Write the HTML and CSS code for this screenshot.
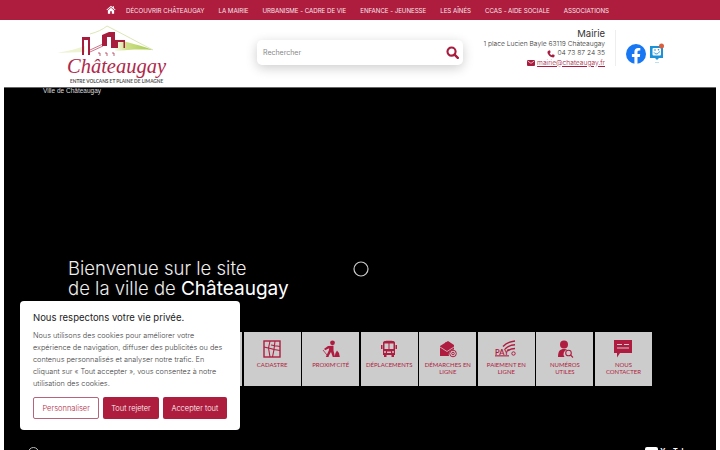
FILE: index.html
```html
<!DOCTYPE html>
<html lang="fr">
<head>
    <meta charset="UTF-8">
    <meta name="viewport" content="width=device-width, initial-scale=1.0">
    <title>Ville de Châteaugay</title>
    <link rel="stylesheet" href="styles.css">
</head>
<body>
    <nav class="topbar">
        <svg class="home-icon" viewBox="0 0 24 20"><path d="M12 1 L1 10.500 L2.500 12 L12 4 L21.500 12 L23 10.500 L19 7 V2 H16 V4.500Z M4.500 12.500 V20 H10 V14 H14 V20 H19.500 V12.500 L12 6Z" fill="#fff"/></svg>
        <a href="#">DÉCOUVRIR CHÂTEAUGAY</a>
        <a href="#">LA MAIRIE</a>
        <a href="#">URBANISME - CADRE DE VIE</a>
        <a href="#">ENFANCE - JEUNESSE</a>
        <a href="#">LES AÎNÉS</a>
        <a href="#">CCAS - AIDE SOCIALE</a>
        <a href="#">ASSOCIATIONS</a>
    </nav>

    <header class="header">
        <div class="logo">
            <svg class="logo-art" viewBox="0 0 110 32">
                <defs>
                    <linearGradient id="hill" x1="0" y1="0" x2="1" y2="0">
                        <stop offset="0" stop-color="#fbfcf0"/>
                        <stop offset="0.300" stop-color="#cfe08a"/>
                        <stop offset="1" stop-color="#a5c94a"/>
                    </linearGradient>
                </defs>
                <path d="M2 28 C12 26 22 24 30 21 L30 27Z" fill="#eef3d4"/>
                <path d="M60 14 C72 17 88 21 98 25 C84 24 72 25 60 26Z" fill="url(#hill)"/>
                <path d="M35 9 C42 7 47 5 52 1 C68 9 84 18 98 25" fill="none" stroke="#d3dfa4" stroke-width=".8"/>
                <path d="M27 30 V12 H35 V30 H33 V15 H29 V30Z" fill="#a81c3e"/>
                <path d="M35 27 L48 21 M35 25 L48 19" stroke="#a81c3e" stroke-width=".6"/>
                <path d="M47 10 L54 7 H60 V23 H56 V12 H52 V21 H47Z" fill="#a81c3e"/>
                <path d="M60 15 H70 V23 H68.500 V17 H63 V23 H60Z" fill="#a81c3e"/>
                <path d="M43 28 h2 v3 M50 28 h2 v3 M57 28 h2 v3" stroke="#a81c3e" stroke-width=".7" fill="none"/>
            </svg>
            <div class="logo-name">Châteaugay</div>
            <div class="logo-tag">ENTRE VOLCANS ET PLAINE DE LIMAGNE</div>
        </div>

        <form class="search">
            <span class="search-label">Rechercher</span>
            <svg class="search-icon" viewBox="0 0 16 16"><circle cx="6.800" cy="6.800" r="5" fill="none" stroke="#a81c3e" stroke-width="2.600"/><path d="M10.500 10.500 L14.500 14.500" stroke="#a81c3e" stroke-width="3" stroke-linecap="round"/></svg>
        </form>

        <address class="contact">
            <strong>Mairie</strong>
            <span>1 place Lucien Bayle 63119 Châteaugay</span>
            <span class="contact-line">
                <svg class="mini-icon" viewBox="0 0 12 12"><path d="M2 1 L4.500 .5 L5.500 3.500 L4 4.800 C4.600 6.200 5.800 7.400 7.200 8 L8.500 6.500 L11.500 7.500 L11 10 C10.500 11.500 8.500 11.500 6.500 10.500 C4 9.300 2.500 7.700 1.300 5.500 C.4 3.800 .6 2 2 1Z" fill="#a81c3e"/></svg>
                04 73 87 24 35
            </span>
            <span class="contact-line">
                <svg class="mini-icon" viewBox="0 0 12 9"><rect width="12" height="9" rx="1.500" fill="#a81c3e"/><path d="M1 1.500 L6 5 L11 1.500" stroke="#fff" fill="none"/></svg>
                <a href="#">mairie@chateaugay.fr</a>
            </span>
        </address>

        <div class="social">
            <svg class="fb-icon" viewBox="0 0 20 20"><circle cx="10" cy="10" r="10" fill="#1877f2"/><path d="M8.400 20 V12.900 H5.900 V10 H8.400 V7.800 C8.400 5.300 9.900 3.900 12.100 3.900 C13.200 3.900 14.300 4.100 14.300 4.100 V6.500 H13.100 C11.900 6.500 11.500 7.300 11.500 8 V10 H14.200 L13.800 12.900 H11.500 V20Z" fill="#fff"/></svg>
            <svg class="msg-icon" viewBox="0 0 16 21">
                <path d="M1 3 H14 V15 H10 L8 17 L6 15 H1Z" fill="#1b92d8"/>
                <rect x="3.500" y="5" width="8.500" height="7.500" rx="1" fill="#fff"/>
                <path d="M5 9.500 C6.500 11.500 9 11.500 10.500 8.500" stroke="#1b92d8" fill="none"/>
                <circle cx="6" cy="7" r=".8" fill="#1b92d8"/><circle cx="9.500" cy="6.700" r=".8" fill="#1b92d8"/>
                <rect x="6" y="19" width="4" height="1" fill="#bcdff3"/>
                <circle cx="12.500" cy="3" r="2.500" fill="#d9603f"/>
            </svg>
        </div>
    </header>

    <main class="hero">
        <div class="hero-caption">Ville de Châteaugay</div>
        <h1 class="hero-title">Bienvenue sur le site<br>de la ville de <b>Châteaugay</b></h1>

        <div class="services">
            <div class="service"></div>
            <div class="service"></div>
            <div class="service"></div>
            <a class="service" href="#">
                <svg viewBox="0 0 18 18"><rect x="1" y="1" width="16" height="16" fill="none" stroke="#b01c40" stroke-width="1.400"/><path d="M7 1 L5.500 8 L1 7 M5.500 8 L7 17 M5.500 8 L11 9.500 L9.500 17 M11 9.500 L17 10.500 M8 5 L17 6.500 M12 1 L11 9.500" fill="none" stroke="#b01c40" stroke-width="1.100"/></svg>
                <span>CADASTRE</span>
            </a>
            <a class="service" href="#">
                <svg viewBox="0 0 18 18"><circle cx="10.500" cy="2.800" r="2.400" fill="#b01c40"/><path d="M6 6 L11.500 5.800 L11.500 10.500 L13 17 H10.800 L9 12 L6 17 H3.800 L6.800 10.500 L7.200 8.300 L3 10.200 L2.200 8.800Z" fill="#b01c40"/><path d="M1 10 L6.500 17" stroke="#b01c40" stroke-width=".8"/><path d="M12.500 17 L13.500 13 L15 10.500 L17 13 L17.800 17Z" fill="#b01c40"/></svg>
                <span>PROXIM'CITÉ</span>
            </a>
            <a class="service" href="#">
                <svg viewBox="0 0 18 18"><path d="M3 3 C3 1 5 .8 9 .8 C13 .8 15 1 15 3 V15 H3Z M1 5 H2.500 V9 H1Z M15.500 5 H17 V9 H15.500Z" fill="#b01c40"/><rect x="4.500" y="3.500" width="4" height="5.500" fill="#ccc"/><rect x="9.500" y="3.500" width="4" height="5.500" fill="#ccc"/><rect x="7" y="11.500" width="4" height="1.500" fill="#ccc"/><circle cx="5" cy="12" r="1" fill="#ccc"/><circle cx="13" cy="12" r="1" fill="#ccc"/><rect x="4" y="15" width="2.500" height="2" fill="#b01c40"/><rect x="11.500" y="15" width="2.500" height="2" fill="#b01c40"/></svg>
                <span>DÉPLACEMENTS</span>
            </a>
            <a class="service" href="#">
                <svg viewBox="0 0 18 18"><path d="M1 6 L9 1 L15 5 V9.500 A5 5 0 0 0 10 16 H1Z" fill="#b01c40"/><path d="M1 7 L8 11.500 L15 7" stroke="#ccc" fill="none" stroke-width=".8"/><path d="M6 3 H11" stroke="#b01c40"/><circle cx="14" cy="13.500" r="3.300" fill="none" stroke="#b01c40"/><circle cx="14" cy="13.500" r="1.300" fill="none" stroke="#b01c40"/></svg>
                <span>DÉMARCHES EN<br>LIGNE</span>
            </a>
            <a class="service" href="#">
                <svg viewBox="0 0 22 18" class="pay-icon"><path d="M8 6.500 C11 3 15 1.500 20 1 M10 9 C12.500 6.500 16 5 20 4.800 M12.500 11 C14.500 9.500 17 8.500 20 8.500" stroke="#b01c40" stroke-width="1.400" fill="none"/><circle cx="18.500" cy="13.500" r="1.700" fill="none" stroke="#b01c40"/><rect x="0" y="15.300" width="14" height="1.100" fill="#b01c40"/><text x="0" y="14.500" class="pay-text">PAY</text></svg>
                <span>PAIEMENT EN<br>LIGNE</span>
            </a>
            <a class="service" href="#">
                <svg viewBox="0 0 18 18"><circle cx="8" cy="4.500" r="4" fill="#b01c40"/><path d="M2 17 C2 11 4 9 8 9 C9.500 9 10.500 9.300 11 9.800 A4.500 4.500 0 0 0 8.500 17Z" fill="#b01c40"/><circle cx="12.500" cy="13" r="2.800" fill="none" stroke="#b01c40" stroke-width="1.100"/><path d="M14.500 15 L17 17.500" stroke="#b01c40" stroke-width="1.100"/></svg>
                <span>NUMÉROS<br>UTILES</span>
            </a>
            <a class="service" href="#">
                <svg viewBox="0 0 18 18"><path d="M0 0 H18 V13 H6 L3 17.500 V13 H0Z" fill="#b01c40"/><path d="M3 4.500 H8 M10 4.500 H15 M3 8 H15" stroke="#ccc" stroke-width="1.100"/></svg>
                <span>NOUS<br>CONTACTER</span>
            </a>
        </div>

        <div class="hero-foot">
            <span class="foot-mark"></span>
            <span class="foot-yt"><i></i>YouTube</span>
        </div>

        <svg class="spinner" viewBox="0 0 16 16"><circle cx="8" cy="8" r="7" fill="none" stroke="#ccc" stroke-width="1.200"/></svg>
    </main>

    <aside class="cookie">
        <h2>Nous respectons votre vie privée.</h2>
        <p>Nous utilisons des cookies pour améliorer votre expérience de navigation, diffuser des publicités ou des contenus personnalisés et analyser notre trafic. En cliquant sur « Tout accepter », vous consentez à notre utilisation des cookies.</p>
        <div class="cookie-buttons">
            <button class="btn-wide btn-outline">Personnaliser</button>
            <button>Tout rejeter</button>
            <button class="btn-wide">Accepter tout</button>
        </div>
    </aside>
</body>
</html>
```

FILE: styles.css
```css
html, body {
    height: 450px;
    overflow: hidden;
}

body {
    margin: 0;
    font-family: 'Inter', sans-serif;
    background: #fff;
    color: #333;
}

a {
    color: inherit;
    text-decoration: none;
}

.topbar {
    height: 20px;
    background: #ae1c3e;
    display: flex;
    align-items: center;
    padding-left: 106px;
    gap: 14px;
    color: #f4e4e8;
    font-size: 6.200px;
    letter-spacing: -0.05px;
}

.home-icon {
    width: 10px;
    height: 9px;
    margin: -2px -4px 0 0;
}

.header {
    height: 67px;
    display: flex;
    align-items: flex-start;
    padding-left: 55px;
}

.logo {
    width: 112px;
    margin-top: 5px;
    text-align: left;
}

.logo-art {
    display: block;
    width: 110px;
    height: 32px;
}

.logo-name {
    font-family: 'Liberation Serif', serif;
    font-style: italic;
    font-size: 20.500px;
    line-height: 19px;
    color: #b0284a;
    margin-left: 12px;
}

.logo-tag {
    font-family: 'Lato', sans-serif;
    font-size: 4.800px;
    font-weight: 700;
    color: #555;
    margin: 2px 0 0 15px;
    white-space: nowrap;
}

.search {
    box-sizing: border-box;
    margin: 20px 0 0 90px;
    width: 206px;
    height: 25px;
    background: #fff;
    border-radius: 5px;
    box-shadow: 0 3px 12px rgba(0, 0, 0, 0.2);
    display: flex;
    align-items: center;
    justify-content: space-between;
    padding: 0 4px 0 6px;
    font-size: 7px;
    color: #888;
}

.search-icon {
    width: 13px;
    height: 13px;
}

.contact {
    margin-top: 8px;
    width: 142px;
    display: flex;
    flex-direction: column;
    align-items: flex-end;
    font-style: normal;
    font-size: 6.700px;
    font-weight: 300;
    line-height: 9.300px;
    color: #333;
    white-space: nowrap;
}

.contact strong {
    font-size: 9.500px;
    font-weight: 400;
    line-height: 12px;
}

.contact-line {
    display: flex;
    align-items: center;
    gap: 2px;
}

.contact-line a {
    color: #a81c3e;
    text-decoration: underline;
}

.mini-icon {
    width: 8px;
    height: 8px;
}

.social {
    box-sizing: border-box;
    margin: 10px 0 0 10px;
    padding: 14px 0 0 10px;
    height: 36px;
    border-left: 1px solid #eee;
    display: flex;
    align-items: flex-start;
    gap: 3px;
}

.fb-icon {
    width: 20px;
    height: 20px;
}

.msg-icon {
    width: 16px;
    height: 21px;
    margin-top: -1px;
}

.hero {
    position: relative;
    margin: 0 4px;
    height: 363px;
    box-sizing: border-box;
    background: #000;
    border-top: 1px solid #666;
    color: #fff;
}

.hero-caption {
    font-family: 'Liberation Sans', sans-serif;
    font-size: 6.500px;
    padding-left: 39px;
    line-height: 5px;
    color: #ddd;
}

.hero-title {
    margin: 165px 0 0 64px;
    font-size: 18.500px;
    line-height: 20px;
    font-weight: 300;
    color: #eee;
}

.hero-title b {
    font-size: 19px;
    font-weight: 400;
    color: #fff;
}

.services {
    margin: 33px 0 0 64px;
    width: 584px;
    display: grid;
    grid-template-columns: repeat(10, 1fr);
    gap: 1.500px;
}

.service {
    height: 54px;
    background: #ccc;
    box-sizing: border-box;
    padding: 8px 2px 0;
    display: flex;
    flex-direction: column;
    align-items: center;
    gap: 3px;
    color: #b01c40;
    font-family: 'Lato', sans-serif;
    font-size: 6px;
    line-height: 7px;
    text-align: center;
}

.service svg {
    width: 18px;
    height: 18px;
    flex: none;
}

.service .pay-icon {
    width: 22px;
}

.pay-text {
    font-size: 7.500px;
    font-weight: 700;
    fill: #b01c40;
}

.hero-foot {
    margin: 61px 0 0 24px;
    width: 662px;
    display: flex;
    justify-content: space-between;
    align-items: flex-start;
}

.foot-mark {
    width: 9px;
    height: 9px;
    border: 1px solid #bbb;
    border-radius: 50%;
}

.foot-yt {
    display: flex;
    gap: 2px;
    font-size: 7px;
    font-weight: 700;
    line-height: 9px;
}

.foot-yt i {
    width: 13px;
    height: 9px;
    background: #fff;
    border-radius: 2px;
}

.spinner {
    position: absolute;
    left: 349px;
    top: 173px;
    width: 16px;
    height: 16px;
}

.cookie {
    position: fixed;
    left: 20px;
    top: 301px;
    width: 220px;
    height: 129px;
    box-sizing: border-box;
    padding: 10px 13px;
    background: #fff;
    border-radius: 4px;
    color: #444;
}

.cookie h2 {
    margin: 0 0 6px;
    font-size: 9.500px;
    line-height: 13px;
    font-weight: 400;
    color: #222;
}

.cookie p {
    margin: 0;
    max-width: 192px;
    font-size: 7.300px;
    font-weight: 300;
    line-height: 12.100px;
}

.cookie-buttons {
    margin-top: 7px;
    display: flex;
    gap: 4px;
}

.cookie-buttons button {
    height: 22px;
    padding: 0;
    flex: 56 1 0;
    background: #ae1c3e;
    color: #fff;
    border: none;
    border-radius: 2px;
    font-family: inherit;
    font-size: 7.500px;
    font-weight: 300;
    white-space: nowrap;
}

.cookie-buttons .btn-wide {
    flex-grow: 65;
}

.cookie-buttons .btn-outline {
    background: #fff;
    color: #ae1c3e;
    border: 1px solid #b5647c;
}
```
